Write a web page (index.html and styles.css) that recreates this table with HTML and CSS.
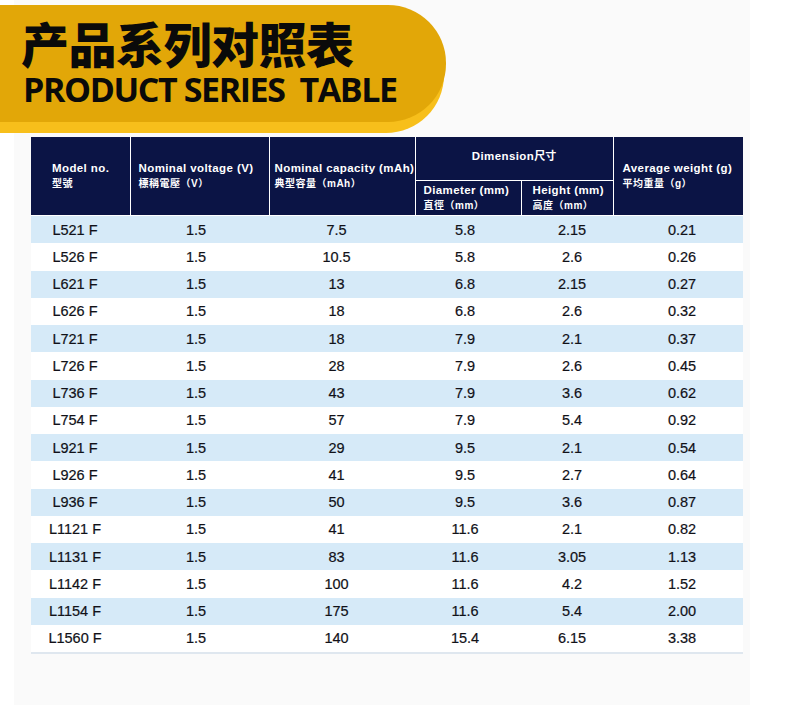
FILE: index.html
```html
<!DOCTYPE html>
<html lang="zh">
<head>
<meta charset="utf-8">
<title>产品系列对照表</title>
<link rel="stylesheet" href="styles.css">
</head>
<body>
<div class="panel">
  <div class="banner">
    <div class="title-cn">产品系列对照表</div>
    <div class="title-en">PRODUCT SERIES&nbsp; TABLE</div>
  </div>
  <div class="table-wrap">
    <table class="spec">
      <colgroup>
        <col class="c1"><col class="c2"><col class="c3"><col class="c4"><col class="c5"><col class="c6">
      </colgroup>
      <thead>
        <tr class="h1">
          <th rowspan="2" class="model"><span class="en">Model no.</span><span class="cn">型號</span></th>
          <th rowspan="2"><span class="en">Nominal voltage (V)</span><span class="cn">標稱電壓（V）</span></th>
          <th rowspan="2" class="cap"><span class="en">Nominal capacity (mAh)</span><span class="cn">典型容量（mAh）</span></th>
          <th colspan="2" class="dim"><span class="en">Dimension<span class="cn-inline">尺寸</span></span></th>
          <th rowspan="2" class="wt"><span class="en">Average weight (g)</span><span class="cn">平均重量（g）</span></th>
        </tr>
        <tr class="h2">
          <th class="sub"><span class="en">Diameter (mm)</span><span class="cn">直徑（mm）</span></th>
          <th class="sub hgt"><span class="en">Height (mm)</span><span class="cn">高度（mm）</span></th>
        </tr>
      </thead>
      <tbody>
        <tr class="alt"><td>L521 F</td><td>1.5</td><td>7.5</td><td>5.8</td><td>2.15</td><td>0.21</td></tr>
        <tr><td>L526 F</td><td>1.5</td><td>10.5</td><td>5.8</td><td>2.6</td><td>0.26</td></tr>
        <tr class="alt"><td>L621 F</td><td>1.5</td><td>13</td><td>6.8</td><td>2.15</td><td>0.27</td></tr>
        <tr><td>L626 F</td><td>1.5</td><td>18</td><td>6.8</td><td>2.6</td><td>0.32</td></tr>
        <tr class="alt"><td>L721 F</td><td>1.5</td><td>18</td><td>7.9</td><td>2.1</td><td>0.37</td></tr>
        <tr><td>L726 F</td><td>1.5</td><td>28</td><td>7.9</td><td>2.6</td><td>0.45</td></tr>
        <tr class="alt"><td>L736 F</td><td>1.5</td><td>43</td><td>7.9</td><td>3.6</td><td>0.62</td></tr>
        <tr><td>L754 F</td><td>1.5</td><td>57</td><td>7.9</td><td>5.4</td><td>0.92</td></tr>
        <tr class="alt"><td>L921 F</td><td>1.5</td><td>29</td><td>9.5</td><td>2.1</td><td>0.54</td></tr>
        <tr><td>L926 F</td><td>1.5</td><td>41</td><td>9.5</td><td>2.7</td><td>0.64</td></tr>
        <tr class="alt"><td>L936 F</td><td>1.5</td><td>50</td><td>9.5</td><td>3.6</td><td>0.87</td></tr>
        <tr><td>L1121 F</td><td>1.5</td><td>41</td><td>11.6</td><td>2.1</td><td>0.82</td></tr>
        <tr class="alt"><td>L1131 F</td><td>1.5</td><td>83</td><td>11.6</td><td>3.05</td><td>1.13</td></tr>
        <tr><td>L1142 F</td><td>1.5</td><td>100</td><td>11.6</td><td>4.2</td><td>1.52</td></tr>
        <tr class="alt"><td>L1154 F</td><td>1.5</td><td>175</td><td>11.6</td><td>5.4</td><td>2.00</td></tr>
        <tr><td>L1560 F</td><td>1.5</td><td>140</td><td>15.4</td><td>6.15</td><td>3.38</td></tr>
      </tbody>
    </table>
  </div>
</div>
</body>
</html>
```

FILE: styles.css
```css
html, body {
  margin: 0;
  padding: 0;
  background: #ffffff;
}

body {
  width: 790px;
  height: 722px;
  overflow: hidden;
  font-family: "Liberation Sans", Arial, "Noto Sans CJK TC", sans-serif;
}

.panel {
  margin-left: 14px;
  width: 736px;
  height: 705px;
  background: #fafafa;
  padding-top: 5px;
  box-sizing: border-box;
}

.banner {
  margin-left: -14px;
  width: 446px;
  height: 117px;
  box-sizing: border-box;
  padding: 13px 0 0 21px;
  background: #e2a708;
  border-radius: 0 58px 58px 0;
  box-shadow: -2px 11px 0 #f7bf1b;
  color: #0a0a0a;
}

.title-cn {
  font-family: "Noto Sans CJK SC", sans-serif;
  font-weight: 900;
  font-size: 48px;
  line-height: 48px;
  height: 48px;
  letter-spacing: -0.5px;
}

.title-en {
  margin-top: 5px;
  margin-left: 2px;
  font-family: "Open Sans", "Liberation Sans", sans-serif;
  font-weight: 700;
  font-size: 34px;
  line-height: 36px;
  letter-spacing: -1.4px;
  white-space: nowrap;
}

.table-wrap {
  margin: 15px 0 0 17px;
  width: 712px;
  border-bottom: 2px solid #dfe7ef;
}

.spec {
  width: 712px;
  table-layout: fixed;
  border-collapse: collapse;
  border-style: hidden;
}

.c1 { width: 99px; }
.c2 { width: 139px; }
.c3 { width: 146px; }
.c4 { width: 106px; }
.c5 { width: 92px; }
.c6 { width: 130px; }

.spec th {
  background: #0b1445;
  color: #ffffff;
  border: 1px solid #ffffff;
  text-align: left;
  vertical-align: middle;
  font-weight: 700;
  padding: 0 0 0 8px;
  white-space: nowrap;
}

.spec .h1 th { height: 37px; }
.spec .h2 th { height: 34px; }

.spec th .en {
  display: block;
  font-size: 11.5px;
  line-height: 16px;
  letter-spacing: 0.4px;
}

.spec th .cn {
  display: block;
  font-family: "Liberation Sans", "Noto Sans CJK TC", sans-serif;
  font-size: 10px;
  line-height: 16px;
  letter-spacing: 0.5px;
}

.spec th .cn-inline {
  font-family: "Noto Sans CJK SC", sans-serif;
  font-size: 11px;
  letter-spacing: 0;
}

.spec th.model { padding-left: 21px; }
.spec th.cap { padding-left: 5px; }
.spec th.dim {
  text-align: center;
  padding: 0 0 6px 0;
}
.spec th.sub .en,
.spec th.sub .cn { line-height: 15px; }
.spec th.hgt { padding-left: 11px; }
.spec th.wt { padding-left: 9px; }

.spec td {
  height: 27.25px;
  padding: 0;
  text-align: center;
  vertical-align: middle;
  font-size: 14.5px;
  color: #111118;
  background: #ffffff;
  -webkit-text-stroke: 0.2px #111118;
}

.spec tr.alt td { background: #d6eaf8; }

.spec td:nth-child(1) { padding-right: 11px; }
.spec td:nth-child(2) { padding-right: 7px; }
.spec td:nth-child(3) { padding-right: 11px; }
.spec td:nth-child(4) { padding-right: 6px; }
.spec td:nth-child(5) { padding-left: 10px; }
.spec td:nth-child(6) { padding-left: 8px; }
```
